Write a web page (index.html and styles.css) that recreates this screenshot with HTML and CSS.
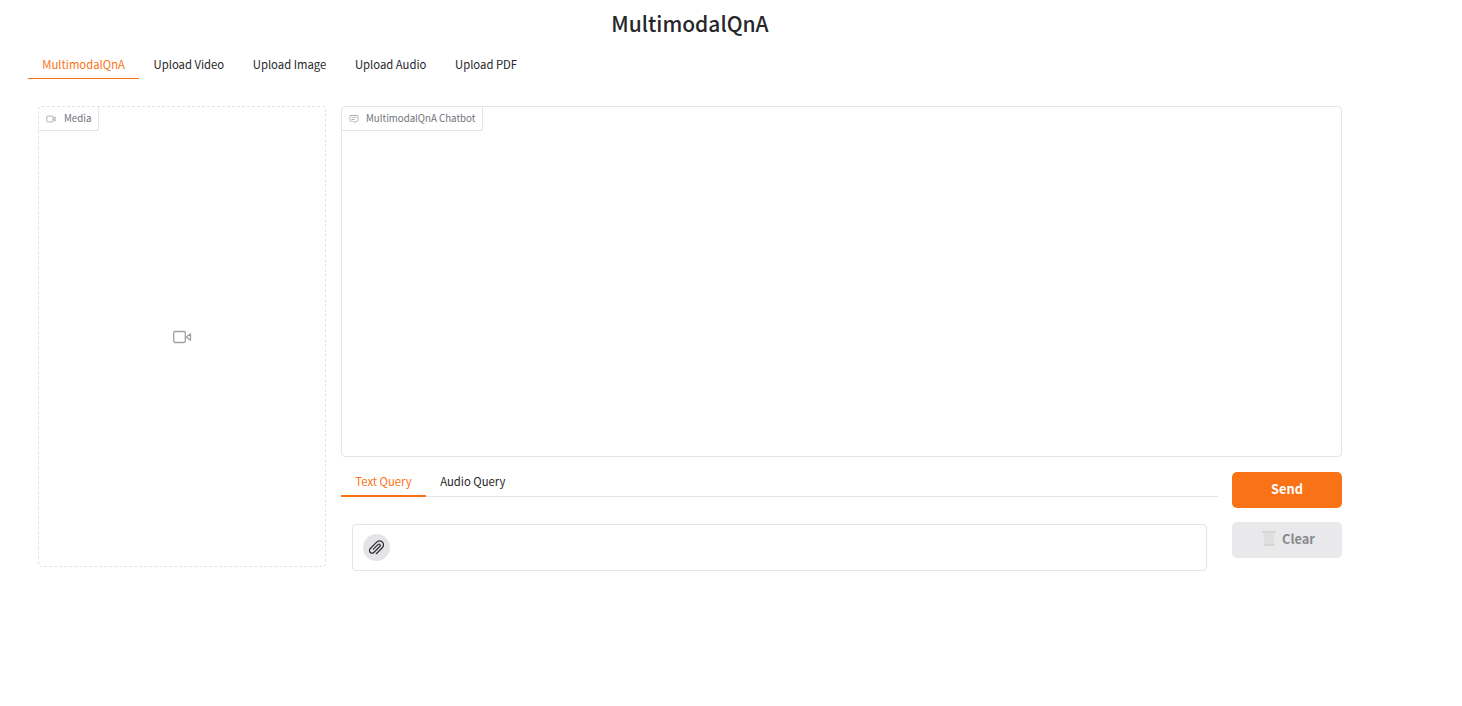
FILE: index.html
```html
<!DOCTYPE html>
<html lang="en">
<head>
<meta charset="utf-8">
<title>MultimodalQnA</title>
<link rel="stylesheet" href="styles.css">
</head>
<body>
<main class="app">
  <h1 class="title">MultimodalQnA</h1>
  <nav class="tabs">
    <button class="tab active">MultimodalQnA</button>
    <button class="tab">Upload Video</button>
    <button class="tab">Upload Image</button>
    <button class="tab">Upload Audio</button>
    <button class="tab">Upload PDF</button>
  </nav>
  <div class="workspace">
    <section class="media">
      <div class="label media-label">
        <svg class="label-icon" viewBox="0 0 24 24"><rect x="2" y="5" width="15" height="14" rx="2"/><path d="M22 7l-5 5 5 5z"/></svg>
        <span>Media</span>
      </div>
      <div class="media-empty">
        <svg class="media-icon" viewBox="0 0 20 20"><rect x="1.700" y="4.500" width="11.600" height="11" rx="1.300"/><path d="M18.500 6.800L14.300 10l4.200 3.200z"/></svg>
      </div>
    </section>
    <div class="conversation">
      <section class="chatbot">
        <div class="label chat-label">
          <svg class="label-icon chat-icon" viewBox="0 0 32 32"><path d="M17.700 30L16 29l4-7h6a2 2 0 0 0 2-2V8a2 2 0 0 0-2-2H6a2 2 0 0 0-2 2v12a2 2 0 0 0 2 2h9v2H6a4 4 0 0 1-4-4V8a4 4 0 0 1 4-4h20a4 4 0 0 1 4 4v12a4 4 0 0 1-4 4h-4.800z"/><path d="M8 10h16v2H8zM8 16h10v2H8z"/></svg>
          <span>MultimodalQnA Chatbot</span>
        </div>
      </section>
      <div class="query-row">
        <div class="query">
          <div class="query-tabs">
            <button class="query-tab active">Text Query</button>
            <button class="query-tab">Audio Query</button>
          </div>
          <div class="input-box">
            <button class="attach" aria-label="Attach">
              <svg class="clip" viewBox="0 0 1920 1920"><path fill-rule="evenodd" d="M1752.768 221.109C1532.646.986 1174.283.986 954.161 221.109l-838.588 838.588c-154.052 154.165-154.052 404.894 0 558.946 149.534 149.421 409.976 149.308 559.059 0l758.738-758.626c87.982-88.094 87.982-231.417 0-319.510-88.320-88.208-231.642-87.982-319.510 0l-638.796 638.908 79.850 79.849 638.795-638.908c43.934-43.821 115.539-43.934 159.812 0 43.934 44.047 43.934 115.877 0 159.812l-758.739 758.625c-110.230 110.118-289.355 110.005-399.360 0-110.118-110.117-110.005-289.242 0-399.247l838.588-838.588c175.963-175.962 462.382-176.188 638.909 0 176.075 176.188 176.075 462.833 0 638.908l-798.607 798.720 79.849 79.850 798.607-798.720c220.010-220.123 220.010-578.485 0-798.607"/></svg>
            </button>
          </div>
        </div>
        <div class="actions">
          <button class="action send">Send</button>
          <button class="action clear">
            <svg class="trash" viewBox="0 0 14 15"><path class="trash-body" d="M1 2h12l-1.200 12H2.200z"/><path class="trash-mesh" d="M2 3l9 10M5 3l7 8M8 3l4 4M2 7l6 6M12 3L3 13M9 3L2 10M6 3L2 7M12 7l-6 6"/><path class="trash-rim" d="M0 1h14M1.700 14h10.600"/></svg>
            <span>Clear</span>
          </button>
        </div>
      </div>
    </div>
  </div>
</main>
</body>
</html>
```
FILE: styles.css
```css
* { box-sizing: border-box; }
body {
  margin: 0;
  background: #fff;
  color: #27272a;
  font-family: "Source Sans Pro", "Noto Sans CJK SC", sans-serif;
}
button { font: inherit; color: inherit; border: 0; background: none; margin: 0; padding: 0; white-space: nowrap; }
svg { display: block; flex: none; }
.app { width: 1324px; margin-left: 28px; }
.title {
  margin: 0;
  height: 52px;
  line-height: 46px;
  text-align: center;
  font-size: 21px;
  font-weight: 500;
}
.tabs { display: flex; height: 27px; }
.tab { font-size: 11.300px; line-height: 24px; height: 27px; padding: 0 14.300px 2px; border-bottom: 1px solid transparent; }
.tab.active { color: #f97316; border-color: #f97316; }
.workspace { display: flex; gap: 15px; padding: 27px 10px 0; }
.media { width: 288px; height: 461px; border: 1px dashed #e4e4e7; border-radius: 4px; display: flex; flex-direction: column; }
.label {
  display: flex;
  align-items: center;
  height: 24px;
  padding-left: 7px;
  border: solid #e4e4e7;
  border-width: 0 1px 1px 0;
  border-radius: 3px 0 3px 0;
  font-size: 9.700px;
  line-height: 20px;
  color: #71717a;
  white-space: nowrap;
}
.label span { height: 22px; }
.media-label { width: 60px; }
.chat-label { width: 141px; }
.label-icon { width: 10px; height: 10px; margin-right: 7.500px; fill: none; stroke: #a1a1aa; stroke-width: 2; }
.chat-icon { margin-right: 7px; fill: #8f8f96; stroke: none; }
.media-label .label-icon { margin-right: 8px; }
.media-empty { flex: 1; display: flex; align-items: center; justify-content: center; margin-top: -24px; }
.media-icon { width: 20px; height: 20px; fill: none; stroke: #a0a0a0; stroke-width: 1.300; stroke-linejoin: round; }
.conversation { width: 1001px; }
.chatbot { height: 351px; border: 1px solid #e4e4e7; border-radius: 4px; }
.query-row { display: flex; gap: 14px; padding-top: 15px; }
.query { width: 877px; }
.query-tabs { display: flex; height: 25px; border-bottom: 1px solid #e4e4e7; margin-bottom: 27px; }
.query-tab { height: 25px; padding: 0 14.300px 5px; line-height: 18px; font-size: 11.300px; border-bottom: 2px solid transparent; }
.query-tab.active { color: #f97316; border-color: #f97316; }
.input-box { height: 47px; margin: 0 11px; border: 1px solid #e4e4e7; border-radius: 4px; padding: 9px 10px; }
.attach { width: 27px; height: 27px; border-radius: 50%; background: #e4e4e7; display: flex; align-items: center; justify-content: center; }
.clip { width: 15px; height: 15px; fill: #18181b; stroke: #18181b; stroke-width: 35; }
.actions { width: 110px; display: flex; flex-direction: column; gap: 14px; }
.action { height: 36px; border-radius: 5px; padding-bottom: 3px; font-size: 12.800px; font-weight: 700; display: flex; align-items: center; justify-content: center; }
.send { background: #f97316; color: #fff; }
.clear { background: #e9e9eb; color: #88888a; gap: 6px; padding-left: 3px; }
.trash { width: 14px; height: 15px; }
.trash-body { fill: #e2e2e2; }
.trash-mesh { fill: none; stroke: #d7d7d5; stroke-width: .6; }
.trash-rim { fill: none; stroke: #cfcfcd; stroke-width: 1.500; }
```
